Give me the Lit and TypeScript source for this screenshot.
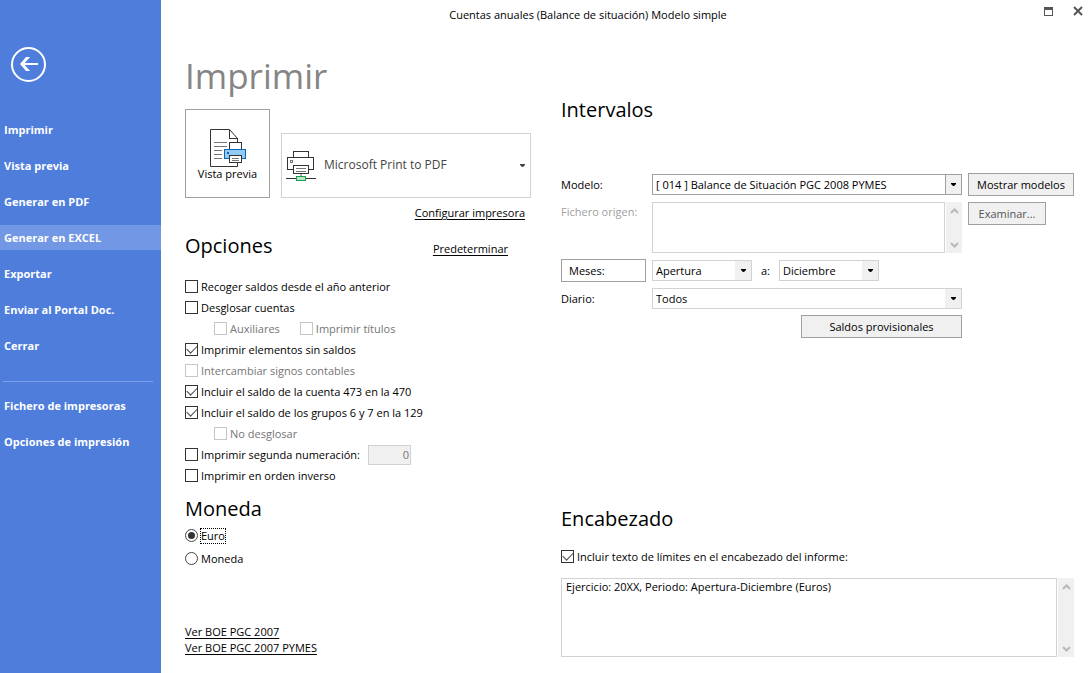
import { LitElement, html, css, svg, nothing } from "lit";
import { customElement } from "lit/decorators.js";
import { classMap } from "lit/directives/class-map.js";

interface Option {
  id: string;
  label: string;
  checked?: boolean;
  disabled?: boolean;
}

const OPTION_ROWS: { indent?: boolean; number?: boolean; items: Option[] }[] = [
  { items: [{ id: "recoger", label: "Recoger saldos desde el año anterior" }] },
  { items: [{ id: "desglosar", label: "Desglosar cuentas" }] },
  {
    indent: true,
    items: [
      { id: "auxiliares", label: "Auxiliares", disabled: true },
      { id: "titulos", label: "Imprimir títulos", disabled: true },
    ],
  },
  { items: [{ id: "elementos", label: "Imprimir elementos sin saldos", checked: true }] },
  { items: [{ id: "signos", label: "Intercambiar signos contables", disabled: true }] },
  { items: [{ id: "c473", label: "Incluir el saldo de la cuenta 473 en la 470", checked: true }] },
  { items: [{ id: "g67", label: "Incluir el saldo de los grupos 6 y 7 en la 129", checked: true }] },
  { indent: true, items: [{ id: "nodesglosar", label: "No desglosar", disabled: true }] },
  { number: true, items: [{ id: "segunda", label: "Imprimir segunda numeración:" }] },
  { items: [{ id: "inverso", label: "Imprimir en orden inverso" }] },
];

const NAV = [
  "Imprimir",
  "Vista previa",
  "Generar en PDF",
  "Generar en EXCEL",
  "Exportar",
  "Enviar al Portal Doc.",
  "Cerrar",
];
const NAV_EXTRA = ["Fichero de impresoras", "Opciones de impresión"];

const previewIcon = svg`<svg width="37" height="39" viewBox="0 0 37 39" fill="none" shape-rendering="crispEdges" aria-hidden="true">
  <path d="M1.5 1.5H20.5L28.5 10.5V38.5H1.5Z" fill="#fff" stroke="#333" shape-rendering="auto"/>
  <path d="M20.5 1.5V10.5H28.5" stroke="#333"/>
  <path d="M5 14.5H18M5 18.5H18M5 22.5H13M5 26.5H13M5 30.5H13" stroke="#777"/>
  <path d="M20.5 21.5V14.5H32.5V21.5" fill="#fff" stroke="#333"/>
  <path d="M15.5 21.5H36.5V30.5H15.5Z" fill="#92caf3" stroke="#0a67b5"/>
  <path d="M18 24.5H20" stroke="#0a67b5" stroke-width="2"/>
  <path d="M20.5 27.5H32.5V34.5H20.5Z" fill="#fff" stroke="#333"/>
  <path d="M23 30.5H30M23 32.5H30" stroke="#777"/>
</svg>`;

const printerIcon = svg`<svg width="32" height="32" viewBox="0 0 32 32" fill="none" shape-rendering="crispEdges" aria-hidden="true">
  <path d="M8.5 7.5V1.5H23.5V7.5" fill="#fff" stroke="#333"/>
  <path d="M2.5 7.5H28.5V19.5H2.5Z" fill="#fff" stroke="#333"/>
  <path d="M5.5 10.5H7.5V12.5H5.5Z" stroke="#777"/>
  <path d="M8.5 15.5H23.5V23.5H8.5Z" fill="#fff" stroke="#333"/>
  <path d="M11 18.5H21M11 21.5H21" stroke="#777"/>
  <path d="M16 24V26" stroke="#aaa" stroke-width="2"/>
  <path d="M1 28.5H31" stroke="#333"/>
  <path d="M11.5 26.5H20.5V30.5H11.5Z" fill="#bfe3c6" stroke="#15a04a"/>
</svg>`;

const chevron = (d: string) => svg`<svg width="9" height="6" viewBox="0 0 9 6" fill="none" aria-hidden="true">
  <path d=${d} stroke="#b9b9b9" stroke-width="2"/>
</svg>`;

@customElement("app-scroll")
class AppScroll extends LitElement {
  static styles = css`
    :host {
      display: flex;
      flex-direction: column;
      justify-content: space-between;
      align-items: center;
      width: 16px;
      padding: 6px 0 5px;
      box-sizing: border-box;
      background: #f0f0f0;
    }
    svg {
      display: block;
    }
  `;
  render() {
    return html`${chevron("M1 5L4.500 1.500L8 5")}${chevron("M1 1L4.500 4.500L8 1")}`;
  }
}

@customElement("app-root")
class AppRoot extends LitElement {
  static styles = css`
    :host {
      display: grid;
      grid-template-columns: 161px minmax(0, 1fr);
      min-height: 100vh;
      background: #fff;
      color: #000;
      font: 11px/16px "Open Sans", "Noto Sans", sans-serif;
    }
    * {
      box-sizing: border-box;
    }
    svg {
      display: block;
    }
    button,
    input,
    select,
    textarea {
      margin: 0;
      font: inherit;
      color: inherit;
      border-radius: 0;
    }
    a {
      color: inherit;
      text-underline-offset: 2px;
    }
    .side {
      background: #4e7ddc;
      color: #fff;
      padding-top: 47px;
    }
    .back {
      display: block;
      margin: 0 0 35px 11px;
      padding: 0;
      border: 0;
      background: none;
    }
    .nav {
      display: grid;
      gap: 11px;
    }
    .nav a {
      padding-left: 4px;
      line-height: 25px;
      font-weight: 700;
      text-decoration: none;
    }
    .nav a.current {
      background: #7297e4;
    }
    .rule {
      height: 1px;
      margin: 23px 8px 11px 3px;
      border: 0;
      background: #7da0ea;
    }
    .page {
      display: flex;
      flex-direction: column;
    }
    .titlebar {
      display: flex;
      height: 30px;
      line-height: 30px;
    }
    .caption {
      flex: 1;
      text-align: center;
    }
    .window {
      display: flex;
      justify-content: flex-end;
      align-items: center;
      gap: 20px;
      width: 76px;
      height: 22px;
      padding-right: 8px;
    }
    .window button {
      padding: 0;
      border: 0;
      background: none;
    }
    .body {
      flex: 1;
      display: grid;
      grid-template-columns: 346px minmax(0, 1fr);
      column-gap: 30px;
      padding: 22px 17px 16px 24px;
    }
    h1 {
      margin: 0 0 9px;
      font-size: 35px;
      line-height: 48px;
      font-weight: 400;
      color: #858585;
    }
    h2 {
      margin: 0;
      font-size: 20px;
      line-height: 28px;
      font-weight: 400;
    }
    .printers {
      display: flex;
      align-items: flex-end;
      gap: 11px;
    }
    .preview {
      display: flex;
      flex-direction: column;
      align-items: center;
      width: 85px;
      height: 89px;
      padding: 18px 0 0;
      border: 1px solid #a0a0a0;
      background: #fff;
    }
    .preview span {
      line-height: 14px;
    }
    .select {
      display: grid;
      grid-template-columns: minmax(0, 1fr) 16px;
      align-items: center;
      height: 21px;
      border: 1px solid #d2d2d2;
      background: #fff;
    }
    .select select {
      grid-area: 1 / 1 / 2 / 3;
      width: 100%;
      height: 100%;
      padding: 0 20px 0 3px;
      border: 0;
      appearance: none;
      background: none;
      outline: none;
    }
    .select .drop {
      grid-area: 1 / 2;
      display: grid;
      place-items: center;
      height: 100%;
      background: #f0f0f0;
      pointer-events: none;
    }
    .select.strong {
      border-color: #a0a0a0;
    }
    .select.strong .drop {
      border-left: 1px solid #a0a0a0;
    }
    .select.printer {
      flex: 1;
      height: 65px;
      grid-template-columns: 38px minmax(0, 1fr) 15px;
      font-size: 12px;
      color: #444;
    }
    .select.printer > svg {
      grid-area: 1 / 1;
      margin-left: 3px;
    }
    .select.printer select {
      grid-area: 1 / 1 / 2 / 4;
      padding: 0 20px 2px 42px;
    }
    .select.printer .drop {
      grid-area: 1 / 3;
      background: none;
    }
    .configure {
      margin: 7px 6px 11px;
      text-align: right;
    }
    .headline {
      display: flex;
      justify-content: space-between;
      align-items: center;
      margin-bottom: 16px;
      padding-right: 23px;
    }
    .headline a {
      padding-top: 6px;
    }
    .row {
      display: flex;
      align-items: center;
      height: 21px;
    }
    .row.indent {
      padding-left: 29px;
      gap: 20px;
    }
    .row.radio {
      height: 23px;
    }
    .check {
      display: flex;
      align-items: center;
      gap: 3px;
    }
    .check.off {
      color: #757575;
    }
    .check input {
      appearance: none;
      flex: none;
      display: grid;
      place-items: center;
      width: 13px;
      height: 13px;
      border: 1px solid #333;
      background: #fff;
    }
    .check input:disabled {
      border-color: #c6c6c6;
    }
    .check input[type="checkbox"]:checked::before {
      content: "";
      width: 9px;
      height: 5px;
      border: solid #444;
      border-width: 0 0 1px 1px;
      transform: translateY(-2px) rotate(-45deg);
    }
    .check input[type="radio"] {
      border-radius: 50%;
      border-color: #444;
    }
    .check input[type="radio"]:checked::before {
      content: "";
      width: 7px;
      height: 7px;
      border-radius: 50%;
      background: #333;
    }
    .focus {
      outline: 1px dotted #000;
      line-height: 14px;
    }
    .number {
      width: 43px;
      height: 20px;
      margin-left: 8px;
      padding: 0 1px;
      border: 1px solid #d2d2d2;
      background: #f0f0f0;
      text-align: right;
    }
    .number:disabled {
      color: #757575;
    }
    .currency {
      margin: 9px 0 1px;
    }
    .links {
      display: grid;
      justify-items: start;
      margin-top: 54px;
    }
    .right {
      display: flex;
      flex-direction: column;
      padding-top: 44px;
    }
    .fields {
      display: grid;
      grid-template-columns: 85px minmax(0, 1fr) 106px;
      gap: 6px;
      align-items: center;
      margin-top: 49px;
    }
    .button {
      height: 23px;
      padding: 0 7px;
      border: 1px solid #a0a0a0;
      background: #f0f0f0;
      white-space: nowrap;
    }
    .button:disabled {
      color: #555;
    }
    .button.plain {
      background: #fff;
      text-align: left;
    }
    .button.short {
      width: 78px;
    }
    .top {
      align-self: start;
    }
    .faded {
      padding-top: 2px;
      color: #a0a0a0;
    }
    .area {
      display: grid;
      grid-template-columns: minmax(0, 1fr) 16px;
      gap: 1px;
    }
    textarea {
      display: block;
      width: 100%;
      height: 51px;
      padding: 0 4px;
      border: 1px solid #d2d2d2;
      background: #fff;
      resize: none;
      overflow: hidden;
      outline: none;
    }
    .tall textarea {
      height: 79px;
    }
    .months {
      display: flex;
      align-items: center;
      gap: 9px;
    }
    .months .select {
      width: 100px;
    }
    .wide {
      width: 161px;
      grid-column: 2;
      justify-self: end;
    }
    .heading {
      margin-top: auto;
    }
    .heading .row {
      margin: 13px 0 11px;
    }
  `;

  private arrow() {
    return html`<span class="drop"
      ><svg width="5" height="3" viewBox="0 0 5 3" aria-hidden="true"><path d="M0 0H5V1L3 3H2L0 1Z" fill="currentColor" /></svg
    ></span>`;
  }

  private select(label: string, value: string, id: string, strong = false) {
    return html`<div class=${classMap({ select: true, strong })}>
      <select id=${id} aria-label=${label}>
        <option>${value}</option>
      </select>
      ${this.arrow()}
    </div>`;
  }

  private check(o: Option) {
    return html`<label class=${classMap({ check: true, off: !!o.disabled })}
      ><input type="checkbox" id=${o.id} .checked=${!!o.checked} ?disabled=${!!o.disabled} />${o.label}</label
    >`;
  }

  render() {
    return html`
      <aside class="side">
        <button class="back" aria-label="Volver">
          <svg width="35" height="35" viewBox="0 0 35 35" fill="none" stroke="#fff">
            <circle cx="17.500" cy="17.500" r="16.500" stroke-width="2" />
            <path d="M27 17H11" stroke-width="2" />
            <path d="M9 17L15 10H19L13 17L19 24H15Z" fill="#fff" stroke="none" />
          </svg>
        </button>
        <nav class="nav">
          ${NAV.map((t) => html`<a href="#" class=${classMap({ current: t === "Generar en EXCEL" })}>${t}</a>`)}
        </nav>
        <hr class="rule" />
        <nav class="nav">${NAV_EXTRA.map((t) => html`<a href="#">${t}</a>`)}</nav>
      </aside>
      <main class="page">
        <header class="titlebar">
          <span class="caption">Cuentas anuales (Balance de situación) Modelo simple</span>
          <div class="window">
            <button aria-label="Maximizar">
              <svg width="9" height="9" viewBox="0 0 9 9" shape-rendering="crispEdges">
                <path d="M0.500 1.500H8.500V8.500H0.500Z" fill="none" stroke="#555" />
                <path d="M0 0H9V3H0Z" fill="#555" />
              </svg>
            </button>
            <button aria-label="Cerrar">
              <svg width="10" height="10" viewBox="0 0 10 10"><path d="M1 1L9 9M9 1L1 9" stroke="#555" stroke-width="2" /></svg>
            </button>
          </div>
        </header>
        <div class="body">
          <section>
            <h1>Imprimir</h1>
            <div class="printers">
              <button class="preview">${previewIcon}<span>Vista previa</span></button>
              <div class="select printer">
                ${printerIcon}
                <select aria-label="Impresora">
                  <option>Microsoft Print to PDF</option>
                </select>
                ${this.arrow()}
              </div>
            </div>
            <div class="configure"><a href="#">Configurar impresora</a></div>
            <div class="headline">
              <h2>Opciones</h2>
              <a href="#">Predeterminar</a>
            </div>
            ${OPTION_ROWS.map(
              (r) => html`<div class=${classMap({ row: true, indent: !!r.indent })}>
                ${r.items.map((o) => this.check(o))}
                ${r.number ? html`<input class="number" aria-label="Segunda numeración" value="0" disabled />` : nothing}
              </div>`
            )}
            <h2 class="currency">Moneda</h2>
            <div class="row radio">
              <label class="check"><input type="radio" name="moneda" checked /><span class="focus">Euro</span></label>
            </div>
            <div class="row radio">
              <label class="check"><input type="radio" name="moneda" />Moneda</label>
            </div>
            <div class="links">
              <a href="#">Ver BOE PGC 2007</a>
              <a href="#">Ver BOE PGC 2007 PYMES</a>
            </div>
          </section>
          <section class="right">
            <h2>Intervalos</h2>
            <div class="fields">
              <label for="modelo">Modelo:</label>
              ${this.select("Modelo", "[ 014 ] Balance de Situación PGC 2008 PYMES", "modelo", true)}
              <button class="button">Mostrar modelos</button>
              <label class="top faded" for="origen">Fichero origen:</label>
              <div class="area"><textarea id="origen" disabled></textarea><app-scroll></app-scroll></div>
              <button class="button short top" disabled>Examinar...</button>
              <button class="button plain">Meses:</button>
              <div class="months">
                ${this.select("Mes inicial", "Apertura", "desde")}
                <span>a:</span>
                ${this.select("Mes final", "Diciembre", "hasta")}
              </div>
              <span></span>
              <label for="diario">Diario:</label>
              ${this.select("Diario", "Todos", "diario")}
              <span></span>
              <button class="button wide">Saldos provisionales</button>
            </div>
            <div class="heading">
              <h2>Encabezado</h2>
              <div class="row">
                ${this.check({ id: "limites", label: "Incluir texto de límites en el encabezado del informe:", checked: true })}
              </div>
              <div class="area tall">
                <textarea aria-label="Texto del encabezado" .value=${"Ejercicio: 20XX, Periodo: Apertura-Diciembre (Euros)"}></textarea>
                <app-scroll></app-scroll>
              </div>
            </div>
          </section>
        </div>
      </main>
    `;
  }
}
